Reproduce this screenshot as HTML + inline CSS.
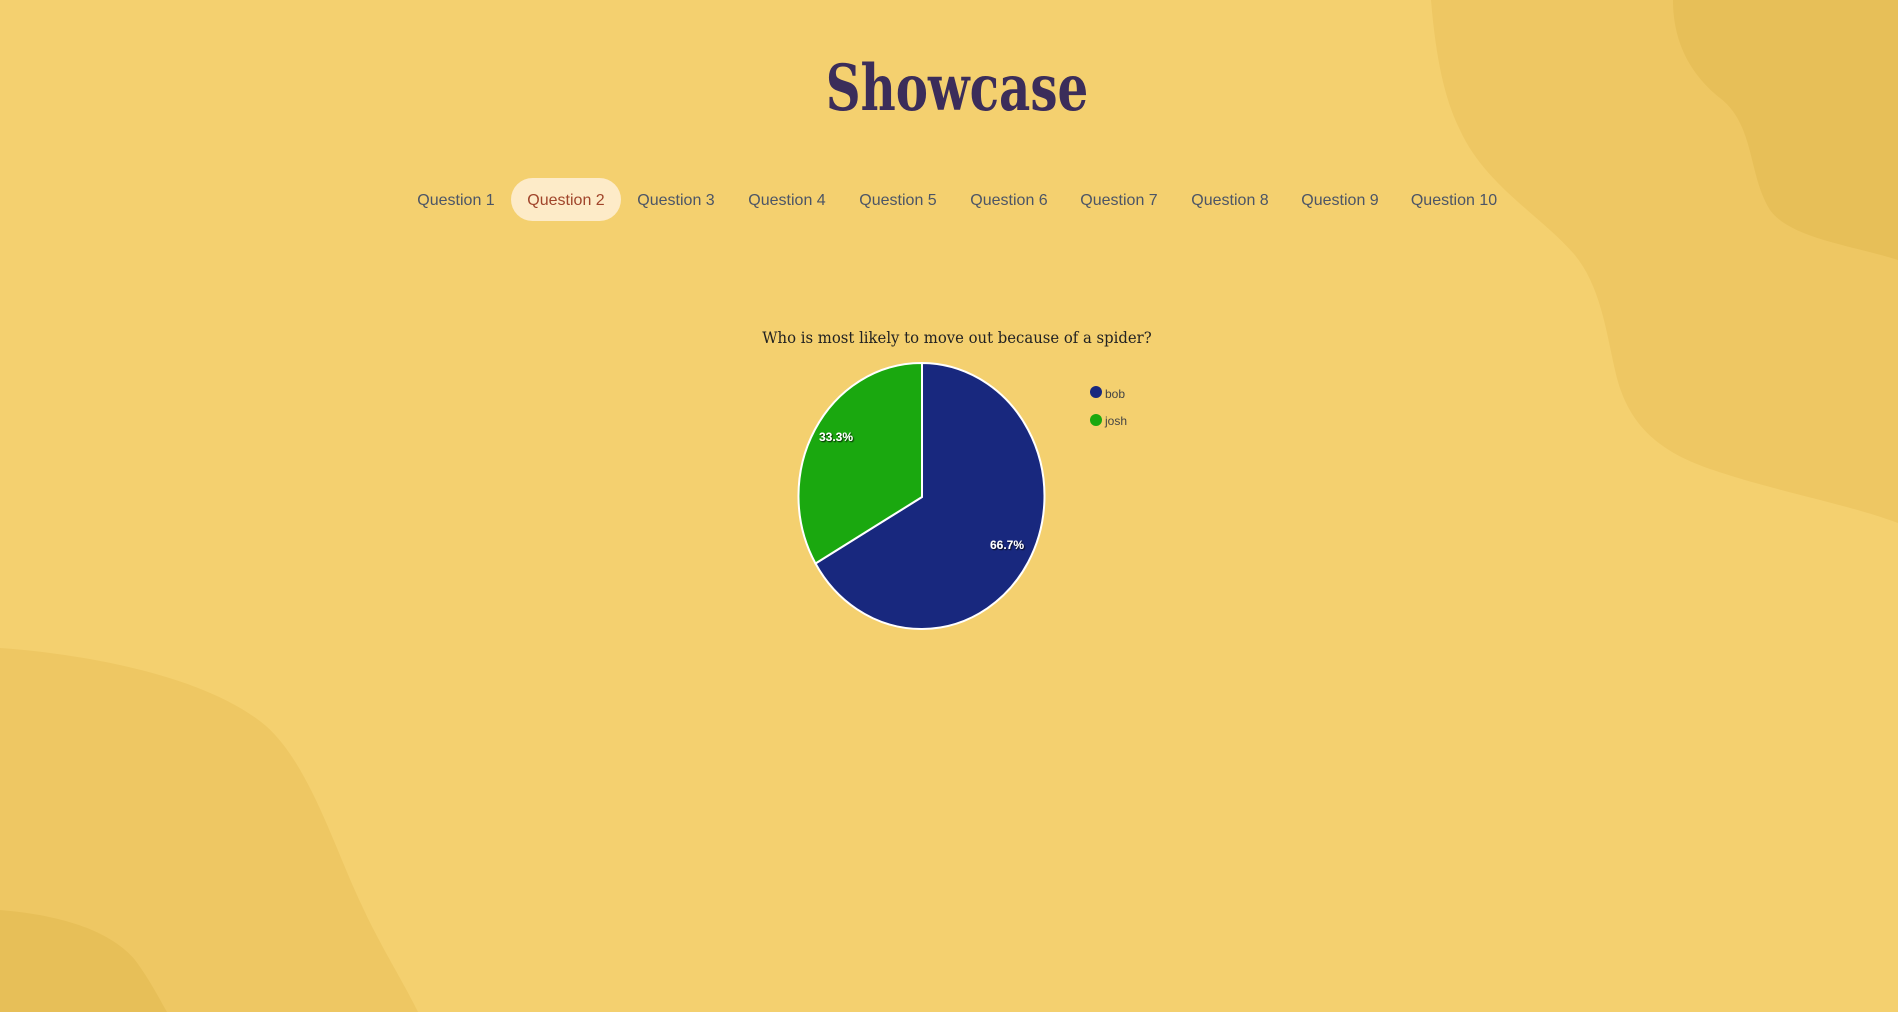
<!DOCTYPE html>
<html><head><meta charset="utf-8"><style>
html,body{margin:0;padding:0}
body{width:1898px;height:1012px;background:#f4d06f;position:relative;overflow:hidden;font-family:"Liberation Sans",sans-serif}
svg.bg{position:absolute;left:0;top:0}
h1{position:absolute;left:8px;width:1898px;top:51px;margin:0;text-align:center;font-family:"DejaVu Serif","Liberation Serif",serif;font-weight:bold;font-size:64px;color:#3b2d5a;letter-spacing:0px;transform:scaleX(0.755)}
.nav{position:absolute;top:178px;left:0;width:1898px;height:43px}
.nav span{position:absolute;top:1px;height:43px;line-height:43px;width:110px;margin-left:-55px;text-align:center;font-size:16px;color:#4c5566}
.nav span.a{top:0;height:43px;line-height:45px;background:#fdebc8;color:#a0442a;border-radius:22px}
.ct{position:absolute;left:0;width:1914px;top:328px;text-align:center;font-family:"DejaVu Serif","Liberation Serif",serif;font-size:16px;color:#222;transform:scaleX(0.927)}
</style></head><body>
<svg class="bg" width="1898" height="1012" viewBox="0 0 1898 1012">
<path d="M1431,0 C1436,60 1445,100 1460,130 C1485,185 1540,215 1574,254 C1600,285 1606,330 1615,370 C1628,430 1665,455 1719,472 C1780,492 1850,505 1898,523 L1898,0Z" fill="#eec763"/>
<path d="M1673,0 C1673,35 1685,70 1720,98 C1755,125 1748,175 1770,210 C1790,238 1850,245 1898,260 L1898,0Z" fill="#e7bf58"/>
<path d="M0,648 C60,652 200,670 266,726 C310,765 335,850 363,908 C380,945 405,985 418,1012 L0,1012Z" fill="#eec763"/>
<path d="M0,910 C60,915 110,930 135,960 C150,980 160,1000 167,1012 L0,1012Z" fill="#e7bf58"/>
</svg>
<h1>Showcase</h1>
<div class="nav">
<span style="left:456px">Question 1</span>
<span class="a" style="left:566px">Question 2</span>
<span style="left:676px">Question 3</span>
<span style="left:787px">Question 4</span>
<span style="left:898px">Question 5</span>
<span style="left:1009px">Question 6</span>
<span style="left:1119px">Question 7</span>
<span style="left:1230px">Question 8</span>
<span style="left:1340px">Question 9</span>
<span style="left:1454px">Question 10</span>
</div>
<div class="ct">Who is most likely to move out because of a spider?</div>
<svg class="bg" width="1898" height="1012" viewBox="0 0 1898 1012">
<defs><filter id="s"><feDropShadow dx="1" dy="1" stdDeviation="0.6" flood-color="#000" flood-opacity="0.8"/></filter></defs>
<path d="M922,497 L922,363 A123,133 0 1,1 815.5,563.5 Z" fill="#18287e" stroke="#fff" stroke-width="2"/>
<path d="M922,497 L815.5,563.5 A123,133 0 0,1 922,363 Z" fill="#1aa80f" stroke="#fff" stroke-width="2"/>
<g font-family="Liberation Sans,sans-serif" font-size="12" font-weight="bold" fill="#fff" filter="url(#s)" text-anchor="middle">
<text x="836" y="441">33.3%</text>
<text x="1007" y="549">66.7%</text>
</g>
<circle cx="1096" cy="392" r="6" fill="#18287e"/>
<circle cx="1096" cy="420" r="6" fill="#1aa80f"/>
<g font-family="Liberation Sans,sans-serif" font-size="12" fill="#444">
<text x="1105" y="398">bob</text>
<text x="1105" y="425">josh</text>
</g>
</svg>
</body></html>
